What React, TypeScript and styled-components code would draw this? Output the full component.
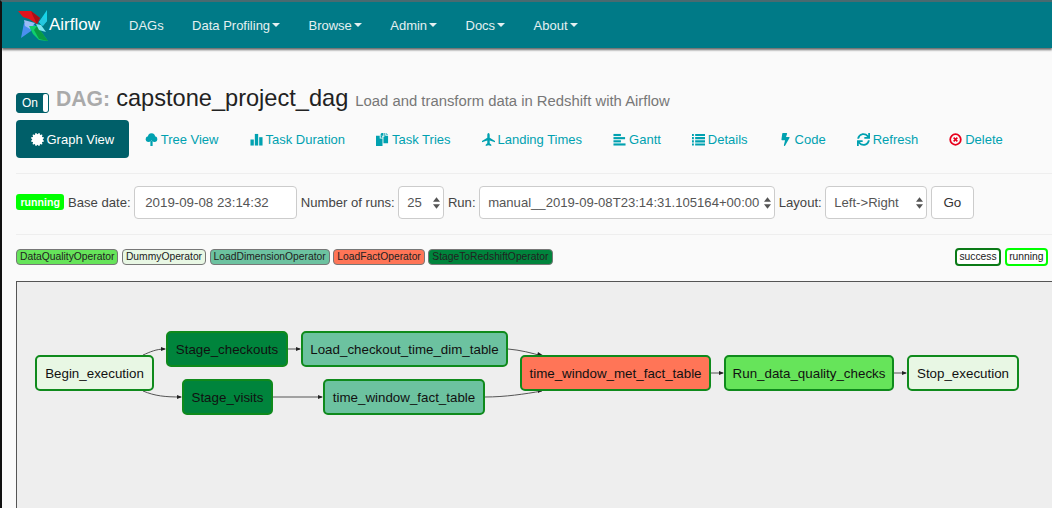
import styled, { createGlobalStyle } from "styled-components";
import { FaCertificate, FaBolt, FaSync } from "react-icons/fa";
import type { ReactNode } from "react";

const GlobalStyle = createGlobalStyle`
  html, body { margin: 0; padding: 0; background: #fafafa; }
  body { font-family: "Liberation Sans", Arial, sans-serif; font-size: 13px; color: #333; }
`;

const Page = styled.div`
  width: 1052px;
  height: 508px;
  box-sizing: border-box;
  overflow: hidden;
  border-left: 2px solid #111;
  border-top: 2px solid #4a6a70;
  background: #fafafa;
  display: flex;
  flex-direction: column;
`;

const Navbar = styled.nav`
  height: 46px;
  flex: none;
  background: #007a87;
  box-shadow: 0 2px 2px rgba(60, 60, 60, 0.75);
  display: flex;
  align-items: center;
  padding-left: 15px;
  color: #f0f5f5;
`;

const Brand = styled.div`
  display: flex;
  align-items: center;
  color: #fff;
  font-size: 17px;
  width: 112px;
`;

const NavItem = styled.div`
  margin-right: 28.4px;
  display: flex;
  align-items: center;
  font-size: 13px;
  color: #e4f0f1;
`;

const Caret = styled.span`
  display: inline-block;
  margin-left: 2px;
  border-top: 4px solid #e4f0f1;
  border-left: 4px solid transparent;
  border-right: 4px solid transparent;
`;

const Content = styled.div`
  padding: 37px 0 0 14px;
  flex: 1;
  display: flex;
  flex-direction: column;
`;

const TitleRow = styled.div`
  display: flex;
  align-items: baseline;
  height: 35px;
`;

const Toggle = styled.div`
  width: 33px;
  height: 20px;
  box-sizing: border-box;
  border: 1px solid #005f69;
  border-radius: 3px;
  background: #00606b;
  color: #fff;
  font-size: 12px;
  line-height: 18px;
  padding-left: 5px;
  position: relative;
  margin-right: 7px;
  align-self: center;
  &::after {
    content: "";
    position: absolute;
    right: 0;
    top: 0;
    bottom: 0;
    width: 5px;
    background: #fff;
    border-radius: 2px;
  }
`;

const DagLabel = styled.span`
  font-size: 21.2px;
  font-weight: 700;
  color: #aaa;
  margin-right: 6px;
`;

const DagName = styled.span`
  font-size: 23.6px;
  color: #222;
  margin-right: 7px;
`;

const DagDesc = styled.span`
  font-size: 14.85px;
  color: #777;
`;

const Tabs = styled.div`
  display: flex;
  gap: 1px;
  margin-bottom: 15px;
`;

const Tab = styled.div<{ $active?: boolean }>`
  height: 38px;
  box-sizing: border-box;
  padding: 0 ${(p) => (p.$active ? "14.5px" : "15px")};
  border-radius: 4px;
  display: flex;
  align-items: center;
  gap: 3px;
  white-space: nowrap;
  color: ${(p) => (p.$active ? "#fff" : "#00a1b0")};
  background: ${(p) => (p.$active ? "#005f69" : "transparent")};
  svg { width: 13px; height: 13px; flex: none; }
`;

const Divider = styled.hr`
  border: none;
  border-top: 1px solid #eee;
  margin: 0;
  width: 1036px;
`;

const FormRow = styled.div`
  display: flex;
  align-items: center;
  height: 60px;
  padding-bottom: 3px;
  box-sizing: border-box;
  font-size: 13.1px;
  color: #444;
  gap: 3.6px;
`;

const StateBadge = styled.span`
  background: #00ff00;
  color: #fff;
  font-size: 10.6px;
  font-weight: 700;
  border-radius: 3px;
  padding: 0 4.5px;
  line-height: 16px;
  height: 16px;
  margin-top: -2px;
`;

const DateInput = styled.input`
  width: 163px;
  height: 33px;
  box-sizing: border-box;
  border: 1px solid #ccc;
  border-radius: 4px;
  background: #fff;
  padding: 0 10px;
  font: 13.3px "Liberation Sans", Arial, sans-serif;
  color: #555;
`;

const SelectWrap = styled.div<{ $width: number }>`
  position: relative;
  width: ${(p) => p.$width}px;
  height: 33px;
`;

const NativeSelect = styled.select`
  appearance: none;
  width: 100%;
  height: 100%;
  box-sizing: border-box;
  border: 1px solid #ccc;
  border-radius: 4px;
  background: #fff;
  padding: 0 8px;
  font: 13.1px "Liberation Sans", Arial, sans-serif;
  color: #555;
`;

const SelectArrows = styled.svg`
  position: absolute;
  right: 4px;
  top: 11px;
  width: 7px;
  height: 12px;
  fill: #555;
  pointer-events: none;
`;

const GoButton = styled.button`
  width: 43px;
  height: 33px;
  border: 1px solid #ccc;
  border-radius: 4px;
  background: #fff;
  font: 13.4px "Liberation Sans", Arial, sans-serif;
  color: #333;
`;

const LegendRow = styled.div`
  display: flex;
  align-items: center;
  height: 46px;
  padding-bottom: 3px;
  box-sizing: border-box;
  width: 1032px;
  gap: 3.5px;
`;

const LegendChip = styled.span<{ $bg: string; $border: string; $thick?: boolean }>`
  font-size: 10.3px;
  line-height: 14px;
  color: #222;
  background: ${(p) => p.$bg};
  border: ${(p) => (p.$thick ? "2px" : "1px")} solid ${(p) => p.$border};
  border-radius: 4px;
  padding: 0 ${(p) => (p.$thick ? "2.5px" : "3px")};
`;

const Spacer = styled.div`
  flex: 1;
`;

const Canvas = styled.div`
  position: relative;
  flex: 1;
  margin-right: -4px;
  background: #eee;
  border: 1px solid #555;
  border-right: none;
  border-bottom: none;
`;

const Edges = styled.svg`
  position: absolute;
  left: -17px;
  top: -282px;
  width: 1052px;
  height: 508px;
  pointer-events: none;
`;

const Node = styled.div<{ $x: number; $y: number; $w: number; $bg: string }>`
  position: absolute;
  left: ${(p) => p.$x - 17}px;
  top: ${(p) => p.$y - 282}px;
  width: ${(p) => p.$w}px;
  height: 36px;
  box-sizing: border-box;
  background: ${(p) => p.$bg};
  border: 2px solid #0f8a1c;
  border-radius: 5px;
  display: flex;
  align-items: center;
  justify-content: center;
  font-size: 13.35px;
  color: #111;
  white-space: nowrap;
`;

const Logo = () => (
  <svg width="32" height="34" viewBox="0 0 32 34">
    <polygon points="1,3 14,3 23,10 20,16 12,11 6,9" fill="#e2141c" />
    <polygon points="14,3 23,10 20,16 16,8" fill="#a81018" />
    <polygon points="30,2 22,14 25,18 30,13" fill="#16d3e8" />
    <polygon points="22,14 26,18 30,13 26,9" fill="#26c6e0" />
    <polygon points="4,30 7,15 18,17 14,23" fill="#4a8ff0" />
    <polygon points="7,12 18,15 13,21 8,18" fill="#9bbcf5" />
    <polygon points="12,18 20,18 31,33 22,32 16,26" fill="#0fcf6c" />
    <polygon points="17,22 20,18 31,33 22,31" fill="#0a9a44" />
    <polygon points="19,16 24,17 29,24 22,22" fill="#7fe3f0" />
  </svg>
);

const TreeIcon = () => (
  <svg viewBox="0 0 14 14" fill="currentColor">
    <circle cx="7" cy="4" r="3.8" />
    <circle cx="3.8" cy="6.6" r="3" />
    <circle cx="10.2" cy="6.6" r="3" />
    <rect x="5.8" y="8" width="2.4" height="6" />
  </svg>
);

const StatsIcon = () => (
  <svg viewBox="0 0 14 14" fill="currentColor">
    <rect x="0.5" y="7" width="3.6" height="6.5" />
    <rect x="5.2" y="1" width="3.6" height="12.5" />
    <rect x="9.9" y="4.5" width="3.6" height="9" />
  </svg>
);

const DuplicateIcon = () => (
  <svg viewBox="0 0 14 14" fill="currentColor">
    <path d="M0 3h4v3h3V14H0zM5 3h1.5L7 5H5z" />
    <path d="M8 0v3l-3-.1V1l1-1zM9 0h1v3h3v8H8V4h1zM11 0l2 2h-2z" />
  </svg>
);

const PlaneIcon = () => (
  <svg viewBox="0 0 14 14" fill="currentColor">
    <path d="M7 0c.9 0 1.3 1.2 1.3 2.4V5L14 8.6V10L8.3 8.1v3L10 12.6V14L7 13.2 4 14v-1.4l1.7-1.5v-3L0 10V8.6L5.7 5V2.4C5.7 1.2 6.1 0 7 0z" />
  </svg>
);

const GanttIcon = () => (
  <svg viewBox="0 0 14 14" fill="currentColor">
    <rect x="0.5" y="1" width="8" height="2.3" />
    <rect x="0.5" y="4.4" width="12.5" height="2.3" />
    <rect x="0.5" y="7.8" width="8" height="2.3" />
    <rect x="0.5" y="11.2" width="13" height="2.3" />
  </svg>
);

const ListIcon = () => (
  <svg viewBox="0 0 14 14" fill="currentColor">
    <path d="M0 1h2v2.3H0zM3.4 1H14v2.3H3.4zM0 4.4h2v2.3H0zM3.4 4.4H14v2.3H3.4zM0 7.8h2v2.3H0zM3.4 7.8H14v2.3H3.4zM0 11.2h2v2.3H0zM3.4 11.2H14v2.3H3.4z" />
  </svg>
);

const RemoveCircle = () => (
  <svg viewBox="0 0 14 14">
    <circle cx="7" cy="7" r="5.7" fill="none" stroke="#e8001c" strokeWidth="1.9" />
    <path d="M5 5l4 4M9 5l-4 4" stroke="#e8001c" strokeWidth="1.7" />
  </svg>
);

const tabs: { label: string; icon: ReactNode }[] = [
  { label: "Tree View", icon: <TreeIcon /> },
  { label: "Task Duration", icon: <StatsIcon /> },
  { label: "Task Tries", icon: <DuplicateIcon /> },
  { label: "Landing Times", icon: <PlaneIcon /> },
  { label: "Gantt", icon: <GanttIcon /> },
  { label: "Details", icon: <ListIcon /> },
  { label: "Code", icon: <FaBolt /> },
  { label: "Refresh", icon: <FaSync /> },
  { label: "Delete", icon: <RemoveCircle /> },
];

const menu = [
  { label: "DAGs" },
  { label: "Data Profiling", caret: true },
  { label: "Browse", caret: true },
  { label: "Admin", caret: true },
  { label: "Docs", caret: true },
  { label: "About", caret: true },
];

const operators = [
  { label: "DataQualityOperator", bg: "#66e45a" },
  { label: "DummyOperator", bg: "#e8f7e4" },
  { label: "LoadDimensionOperator", bg: "#6cc2a0" },
  { label: "LoadFactOperator", bg: "#ff7557" },
  { label: "StageToRedshiftOperator", bg: "#00843c" },
];

const nodes = [
  { label: "Begin_execution", x: 35, y: 355, w: 119, bg: "#e8f7e4" },
  { label: "Stage_checkouts", x: 166, y: 331, w: 122, bg: "#00843c" },
  { label: "Load_checkout_time_dim_table", x: 301, y: 331, w: 207, bg: "#6cc2a0" },
  { label: "Stage_visits", x: 182, y: 379, w: 91, bg: "#00843c" },
  { label: "time_window_fact_table", x: 323, y: 379, w: 162, bg: "#6cc2a0" },
  { label: "time_window_met_fact_table", x: 520, y: 355, w: 191, bg: "#ff7557" },
  { label: "Run_data_quality_checks", x: 724, y: 355, w: 170, bg: "#66e45a" },
  { label: "Stop_execution", x: 907, y: 355, w: 112, bg: "#e8f7e4" },
];

const edges = [
  { d: "M143 355C150 352 156 349 165 349", tip: "166,349 161,347 161,351" },
  { d: "M143 391C155 396 165 397 181 397", tip: "182,397 177,395 177,399" },
  { d: "M288 349L300 349", tip: "301,349 296,347 296,351" },
  { d: "M273 397L322 397", tip: "323,397 318,395 318,399" },
  { d: "M508 349C520 350 532 353 542 356", tip: "544,356 538,352 537,356" },
  { d: "M485 397C505 397 525 394 542 391", tip: "544,390 538,389 538,393" },
  { d: "M711 373L723 373", tip: "724,373 719,371 719,375" },
  { d: "M894 373L906 373", tip: "907,373 902,371 902,375" },
];

const Arrows = () => (
  <SelectArrows viewBox="0 0 8 13">
    <path d="M4 0l4 5H0zM4 13L0 8h8z" />
  </SelectArrows>
);

function App() {
  return (
    <Page>
      <GlobalStyle />
      <Navbar>
        <Brand>
          <Logo />
          Airflow
        </Brand>
        {menu.map((m) => (
          <NavItem key={m.label}>
            {m.label}
            {m.caret && <Caret />}
          </NavItem>
        ))}
      </Navbar>
      <Content>
        <TitleRow>
          <Toggle>On</Toggle>
          <DagLabel>DAG:</DagLabel>
          <DagName>capstone_project_dag</DagName>
          <DagDesc>Load and transform data in Redshift with Airflow</DagDesc>
        </TitleRow>
        <Tabs>
          <Tab $active>
            <FaCertificate />
            Graph View
          </Tab>
          {tabs.map((t) => (
            <Tab key={t.label}>
              {t.icon}
              {t.label}
            </Tab>
          ))}
        </Tabs>
        <Divider />
        <FormRow>
          <StateBadge>running</StateBadge>
          Base date:
          <DateInput readOnly value="2019-09-08 23:14:32" />
          Number of runs:
          <SelectWrap $width={46}>
            <NativeSelect defaultValue="25">
              <option>25</option>
            </NativeSelect>
            <Arrows />
          </SelectWrap>
          Run:
          <SelectWrap $width={296}>
            <NativeSelect defaultValue="manual__2019-09-08T23:14:31.105164+00:00">
              <option>manual__2019-09-08T23:14:31.105164+00:00</option>
            </NativeSelect>
            <Arrows />
          </SelectWrap>
          Layout:
          <SelectWrap $width={102}>
            <NativeSelect defaultValue="Left->Right">
              <option>{"Left->Right"}</option>
            </NativeSelect>
            <Arrows />
          </SelectWrap>
          <GoButton>Go</GoButton>
        </FormRow>
        <Divider />
        <LegendRow>
          {operators.map((o) => (
            <LegendChip key={o.label} $bg={o.bg} $border="#777">
              {o.label}
            </LegendChip>
          ))}
          <Spacer />
          <LegendChip $bg="#fff" $border="#0b7a17" $thick>
            success
          </LegendChip>
          <LegendChip $bg="#fff" $border="#00ff00" $thick>
            running
          </LegendChip>
        </LegendRow>
        <Canvas>
          <Edges viewBox="0 0 1052 508">
            {edges.map((e) => (
              <g key={e.d}>
                <path d={e.d} fill="none" stroke="#555" strokeWidth="1" />
                <polygon points={e.tip} fill="#222" />
              </g>
            ))}
          </Edges>
          {nodes.map((n) => (
            <Node key={n.label} $x={n.x} $y={n.y} $w={n.w} $bg={n.bg}>
              {n.label}
            </Node>
          ))}
        </Canvas>
      </Content>
    </Page>
  );
}

export default App;
